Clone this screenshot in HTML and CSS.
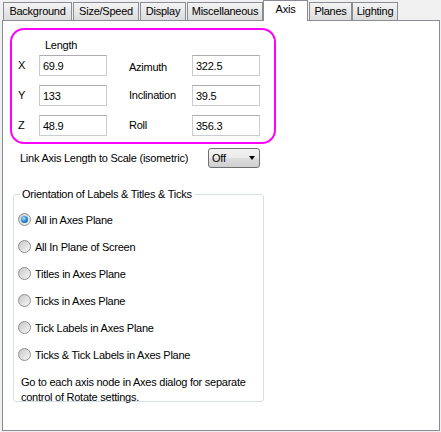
FILE: index.html
```html
<!DOCTYPE html>
<html>
<head>
<meta charset="utf-8">
<link rel="stylesheet" href="styles.css">
</head>
<body>
<div class="dialog">
  <div class="tabs">
    <div class="tab tab-bg">Background</div>
    <div class="tab tab-size">Size/Speed</div>
    <div class="tab tab-display">Display</div>
    <div class="tab tab-misc">Miscellaneous</div>
    <div class="tab tab-axis selected">Axis</div>
    <div class="tab tab-planes">Planes</div>
    <div class="tab tab-lighting">Lighting</div>
  </div>
  <div class="panel">
    <div class="axis-box">
      <div class="head">Length</div>
      <div class="lbl">X</div>
      <input class="field" type="text" value="69.9" readonly>
      <div class="lbl lbl-right lbl-first">Azimuth</div>
      <input class="field" type="text" value="322.5" readonly>
      <div class="lbl">Y</div>
      <input class="field" type="text" value="133" readonly>
      <div class="lbl lbl-right">Inclination</div>
      <input class="field" type="text" value="39.5" readonly>
      <div class="lbl">Z</div>
      <input class="field" type="text" value="48.9" readonly>
      <div class="lbl lbl-right">Roll</div>
      <input class="field" type="text" value="356.3" readonly>
    </div>
    <div class="link-row">
      <div class="link-label">Link Axis Length to Scale (isometric)</div>
      <div class="combo"><span>Off</span><span class="arrow"></span></div>
    </div>
    <fieldset class="group">
      <legend>Orientation of Labels &amp; Titles &amp; Ticks</legend>
      <div class="options">
        <div class="option"><span class="radio checked"></span><span>All in Axes Plane</span></div>
        <div class="option"><span class="radio"></span><span>All In Plane of Screen</span></div>
        <div class="option"><span class="radio"></span><span>Titles in Axes Plane</span></div>
        <div class="option"><span class="radio"></span><span>Ticks in Axes Plane</span></div>
        <div class="option"><span class="radio"></span><span>Tick Labels in Axes Plane</span></div>
        <div class="option"><span class="radio"></span><span>Ticks &amp; Tick Labels in Axes Plane</span></div>
      </div>
      <div class="note">Go to each axis node in Axes dialog for separate<br>control of Rotate settings.</div>
    </fieldset>
  </div>
</div>
</body>
</html>
```
FILE: styles.css
```css
html, body {
  margin: 0;
  padding: 0;
  background: #f0f0f0;
}
body {
  font-family: "Liberation Sans", Arial, sans-serif;
  font-size: 11px;
  letter-spacing: -0.25px;
  color: #000;
}
.dialog {
  width: 441px;
  height: 432px;
  overflow: hidden;
}
.tabs {
  display: flex;
  align-items: flex-end;
  height: 20px;
  padding-left: 3px;
}
.tab {
  box-sizing: border-box;
  height: 18px;
  border: 1px solid #898c95;
  border-bottom: none;
  background: linear-gradient(#f4f4f4, #e6e6e6 55%, #dcdcdc);
  text-align: center;
  line-height: 17px;
  white-space: nowrap;
  margin-right: 1px;
}
.tab.selected {
  height: 21px;
  margin-bottom: -1px;
  background: #fff;
  line-height: 16px;
  position: relative;
  z-index: 1;
}
.tab-bg { width: 69px; }
.tab-size { width: 66px; }
.tab-display { width: 46px; }
.tab-misc { width: 76px; margin-right: 0; }
.tab-axis { width: 45px; margin-right: 1px; }
.tab-planes { width: 43px; margin-right: 0; }
.tab-lighting { width: 46px; }
.panel {
  box-sizing: border-box;
  margin-left: 2px;
  width: 438px;
  height: 411px;
  border: 1px solid #898c95;
  background: #fff;
}
.axis-box {
  box-sizing: border-box;
  margin: 7px 0 0 7px;
  width: 266px;
  height: 116px;
  border: 2px solid #ff00ff;
  border-radius: 14px;
  padding-left: 6px;
  display: grid;
  grid-template-columns: 21px 68px 85px 68px;
  grid-template-rows: 16px 21px 21px 21px;
  row-gap: 9px;
  align-items: center;
  align-content: start;
}
.head {
  grid-column: 1 / -1;
  align-self: start;
  padding: 8px 0 0 27px;
  line-height: 14px;
  height: 16px;
  box-sizing: border-box;
  overflow: visible;
  white-space: nowrap;
}
.lbl {
  line-height: 13px;
}
.lbl-right {
  padding-left: 22px;
}
.lbl-first {
  padding-top: 4px;
}
.field {
  box-sizing: border-box;
  width: 68px;
  height: 21px;
  margin: 0;
  padding: 0 0 0 3px;
  border: 1px solid #c9ccd2;
  border-top-color: #abadb3;
  font: inherit;
  letter-spacing: inherit;
  color: #000;
  background: #fff;
  outline: none;
}
.link-row {
  display: flex;
  align-items: center;
  height: 20px;
  margin: 4px 0 0 17px;
}
.link-label {
  width: 188px;
  white-space: nowrap;
}
.combo {
  box-sizing: border-box;
  width: 52px;
  height: 20px;
  border: 1px solid #707070;
  border-radius: 3px;
  background: linear-gradient(#f2f2f2, #ebebeb 50%, #dddddd 50%, #cfcfcf);
  display: flex;
  align-items: center;
  justify-content: space-between;
  padding: 0 4px 0 3px;
}
.arrow {
  width: 0;
  height: 0;
  border-left: 3.5px solid transparent;
  border-right: 3.5px solid transparent;
  border-top: 4px solid #000;
}
.group {
  box-sizing: border-box;
  margin: 20px 0 0 10px;
  width: 251px;
  border: 1px solid #d5dfe5;
  border-radius: 3px;
  padding: 0 0 0 4px;
  min-width: 0;
}
.group legend {
  padding: 0 2px;
  margin-left: 2px;
  line-height: 13px;
}
.options {
  padding-top: 5px;
}
.option {
  display: flex;
  align-items: center;
  gap: 4px;
  height: 27px;
  white-space: nowrap;
}
.radio {
  box-sizing: border-box;
  width: 13px;
  height: 13px;
  border-radius: 50%;
  border: 1px solid #8e8f8f;
  background: linear-gradient(135deg, #c8c8c8, #f6f6f6);
  display: flex;
  align-items: center;
  justify-content: center;
  flex: none;
}
.radio.checked::after {
  content: "";
  width: 7px;
  height: 7px;
  border-radius: 50%;
  background: radial-gradient(circle at 40% 35%, #a8e4ff 0, #2f8fd8 45%, #0c3d73 100%);
}
.note {
  margin: 7px 0 -4px 3px;
  line-height: 15px;
  white-space: nowrap;
}
```
